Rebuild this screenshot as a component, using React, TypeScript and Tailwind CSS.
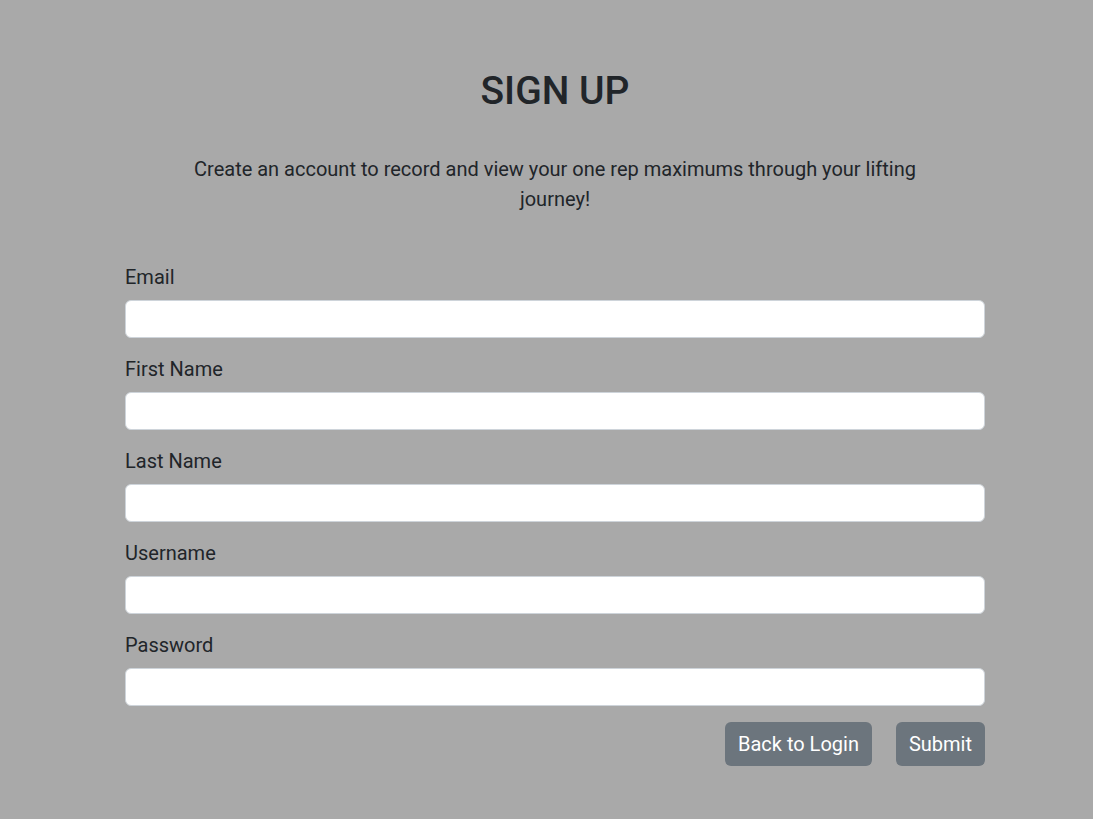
const fields = ["Email", "First Name", "Last Name", "Username", "Password"];

const App = () => {
  return (
    <div className="min-h-[819px] w-full bg-[#a9a9a9] font-['Roboto',sans-serif] text-[#212529]">
      <div className="ml-[125px] w-[860px] pt-[67px]">
        <h1 className="text-center text-[39px] font-medium leading-[48px]">SIGN UP</h1>
        <p className="mx-auto mt-[39px] w-[740px] text-center text-[20px] leading-[30px]">
          Create an account to record and view your one rep maximums through your lifting journey!
        </p>

        <form className="mt-[48px] flex flex-col">
          {fields.map((f) => (
            <div key={f} className="mb-4 flex flex-col">
              <label className="mb-2 text-[20px] leading-[30px]">{f}</label>
              <input
                type={f === "Password" ? "password" : "text"}
                className="h-[38px] w-full rounded-[6px] border border-[#ced4da] bg-white px-3 text-[16px]"
              />
            </div>
          ))}

          <div className="flex justify-end gap-6">
            <button
              type="button"
              className="h-[44px] rounded-[6px] bg-[#6c757d] px-[13px] text-[20px] text-white"
            >
              Back to Login
            </button>
            <button
              type="submit"
              className="h-[44px] rounded-[6px] bg-[#6c757d] px-[13px] text-[20px] text-white"
            >
              Submit
            </button>
          </div>
        </form>
      </div>
    </div>
  );
};

export default App;
